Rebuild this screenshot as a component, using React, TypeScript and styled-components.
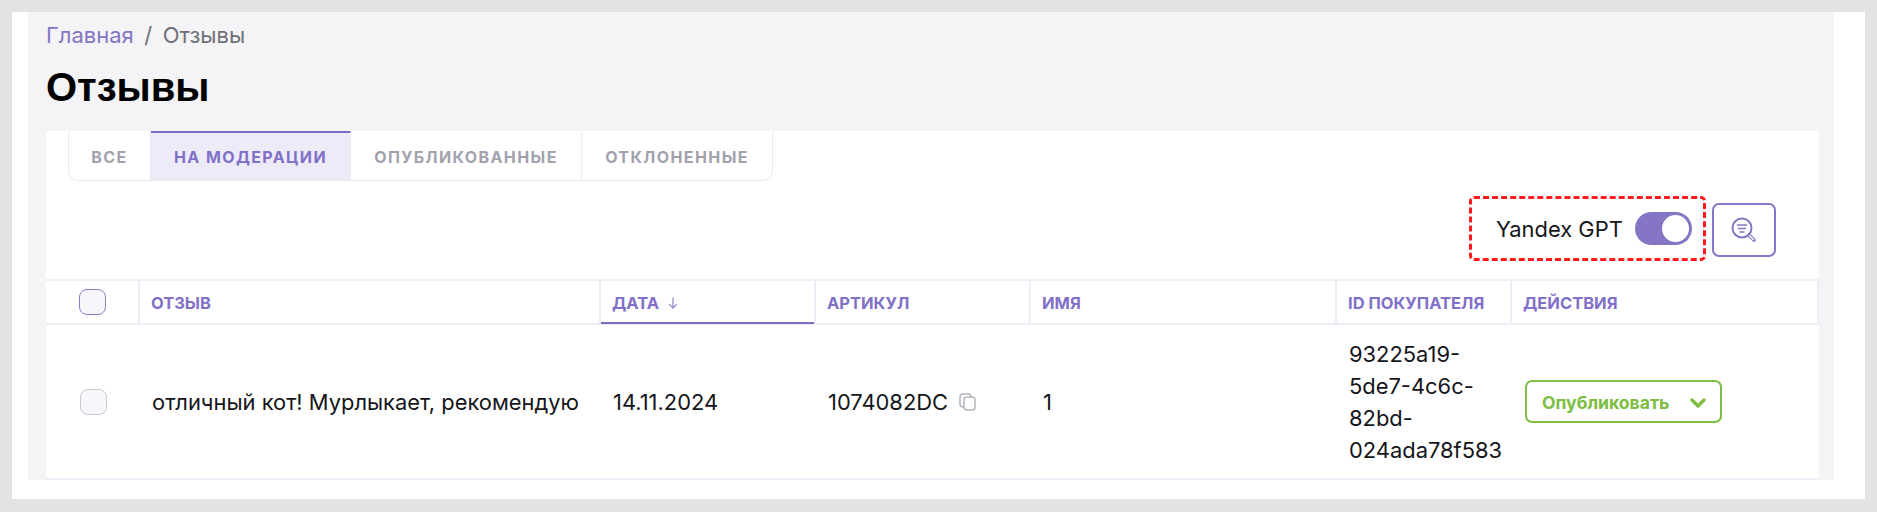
import React from "react";
import styled, { createGlobalStyle } from "styled-components";

const GlobalStyle = createGlobalStyle`
  html, body {
    margin: 0;
    padding: 0;
    background: #e3e3e3;
  }
  * {
    box-sizing: border-box;
  }
`;

const Frame = styled.div`
  width: 1853px;
  height: 487px;
  margin: 12px 0 0 12px;
  padding: 0 31px 19px 16px;
  background: #ffffff;
  font-family: Inter, "Noto Sans", sans-serif;
  overflow: hidden;
`;

const Page = styled.div`
  height: 100%;
  padding: 0 15px 0 18px;
  background: #f4f4f7;
  display: flex;
  flex-direction: column;
`;

const Breadcrumbs = styled.nav`
  display: flex;
  gap: 10.5px;
  height: 36px;
  padding-top: 10px;
  font-size: 22px;
  line-height: 26px;
  color: #6f6f77;
`;

const Crumb = styled.a`
  color: #8575c4;
`;

const Title = styled.h1`
  margin: 0;
  height: 84px;
  padding-top: 16px;
  font-family: "Liberation Sans", Arial, sans-serif;
  font-size: 40px;
  line-height: 46px;
  font-weight: 700;
  color: #000000;
`;

const Panel = styled.section`
  flex: 1;
  background: #ffffff;
  display: flex;
  flex-direction: column;
`;

const Tabs = styled.div`
  display: flex;
  align-self: flex-start;
  height: 50px;
  margin-left: 22px;
  border: 1px solid #ebebf3;
  border-top: none;
  border-radius: 0 0 10px 10px;
`;

const Tab = styled.div<{ $active?: boolean; $width: number }>`
  display: flex;
  align-items: center;
  justify-content: center;
  width: ${(p) => p.$width}px;
  font-size: 16px;
  font-weight: 700;
  letter-spacing: 1.4px;
  color: ${(p) => (p.$active ? "#8170c8" : "#a3a1ae")};
  background: ${(p) => (p.$active ? "#eeebf9" : "transparent")};
  border-top: 2px solid ${(p) => (p.$active ? "#7d6cc4" : "transparent")};
  border-right: 1px solid #ebebf3;
  &:last-child {
    border-right: none;
  }
`;

const Toolbar = styled.div`
  display: flex;
  justify-content: flex-end;
  align-items: flex-start;
  gap: 6px;
  height: 98px;
  padding: 15px 43px 0 0;
`;

const GptBox = styled.div`
  display: flex;
  align-items: center;
  gap: 12px;
  width: 237px;
  height: 65px;
  padding: 0 0 0 24px;
  border: 3px dashed #ff1a1f;
  border-radius: 5px;
`;

const GptLabel = styled.span`
  font-size: 21.9px;
  color: #15151a;
`;

const Toggle = styled.div`
  display: flex;
  align-items: center;
  justify-content: flex-end;
  flex: none;
  width: 57px;
  height: 33px;
  padding-right: 3px;
  border-radius: 17px;
  background: #8575c4;
`;

const Knob = styled.div`
  width: 27px;
  height: 27px;
  border-radius: 50%;
  background: #ffffff;
`;

const SearchButton = styled.button`
  display: flex;
  align-items: center;
  justify-content: center;
  width: 64px;
  height: 54px;
  margin-top: 7px;
  padding: 0;
  background: #ffffff;
  border: 2px solid #8575c4;
  border-radius: 7px;
`;

const Row = styled.div<{ $head?: boolean }>`
  display: grid;
  grid-template-columns: 94px 461px 215px 215px 306px 175px 307px;
  height: ${(p) => (p.$head ? "46px" : "155px")};
  border-bottom: 2px solid #ededf5;
  ${(p) => p.$head && "border-top: 2px solid #ededf5;"}
`;

const HeadCell = styled.div<{ $sorted?: boolean }>`
  display: flex;
  align-items: center;
  gap: 8px;
  padding-left: 11px;
  padding-top: 1px;
  font-size: 16.5px;
  font-weight: 700;
  color: #8170c8;
  border-right: 2px solid #ededf5;
  ${(p) => p.$sorted && "box-shadow: inset 0 -2px 0 #7d6cc4; margin-bottom: -1px;"}
`;

const CheckCell = styled.div`
  display: flex;
  align-items: center;
  justify-content: center;
`;

const HeadCheckCell = styled(CheckCell)`
  border-right: 2px solid #ededf5;
`;

const Check = styled.div<{ $head?: boolean }>`
  width: 27px;
  height: 26px;
  margin-left: 1px;
  border-radius: 8px;
  background: #f7f7fb;
  border: 1.5px solid ${(p) => (p.$head ? "#8c7dcc" : "#c9c9cf")};
`;

const Cell = styled.div`
  display: flex;
  align-items: center;
  gap: 10px;
  padding-left: 12px;
  font-size: 21.9px;
  line-height: 32px;
  color: #15151a;
`;

const BuyerCell = styled(Cell)`
  padding-right: 6px;
  overflow-wrap: anywhere;
`;

const PublishButton = styled.button`
  display: flex;
  align-items: center;
  justify-content: space-between;
  width: 197px;
  height: 43px;
  margin-left: 13px;
  padding: 2px 13px 0 15px;
  background: #ffffff;
  border: 2px solid #7cbd42;
  border-radius: 7px;
  font-family: Inter, "Noto Sans", sans-serif;
  font-size: 17.6px;
  font-weight: 700;
  color: #7cbd42;
`;

const ActionCell = styled.div`
  display: flex;
  align-items: center;
`;

const SearchIcon = () => (
  <svg width="28" height="28" viewBox="0 0 28 28" fill="none" stroke="#8575c4" strokeLinecap="round">
    <circle cx="12" cy="12" r="9.5" strokeWidth="2" />
    <path d="M7.5 9h9M8.5 12.5h7M10 16h4" strokeWidth="1.5" />
    <path d="M19 19l5 5" strokeWidth="3.6" />
    <path d="M19.6 19.6l3.8 3.8" strokeWidth="1.4" stroke="#ffffff" />
  </svg>
);

const SortIcon = () => (
  <svg width="12" height="14" viewBox="0 0 12 14" fill="none" stroke="#9c8fd2" strokeWidth="1.3" strokeLinecap="round" strokeLinejoin="round">
    <path d="M6 2v10M2.5 8.5L6 12l3.5-3.5" />
  </svg>
);

const CopyIcon = () => (
  <svg width="20" height="20" viewBox="0 0 20 20" fill="none" stroke="#b4b4bc" strokeWidth="1.5">
    <rect x="2" y="2" width="11" height="13" rx="3" />
    <rect x="6" y="5" width="11" height="13" rx="3" fill="#ffffff" />
  </svg>
);

const ChevronIcon = () => (
  <svg width="18" height="12" viewBox="0 0 18 12" fill="none" stroke="#7cbd42" strokeWidth="3.4" strokeLinecap="round" strokeLinejoin="round">
    <path d="M3 3l6 6 6-6" />
  </svg>
);

export default function App() {
  return (
    <>
      <GlobalStyle />
      <Frame>
        <Page>
          <Breadcrumbs>
            <Crumb>Главная</Crumb>
            <span>/</span>
            <span>Отзывы</span>
          </Breadcrumbs>
          <Title>Отзывы</Title>
          <Panel>
            <Tabs>
              <Tab $width={82}>ВСЕ</Tab>
              <Tab $width={200} $active>НА МОДЕРАЦИИ</Tab>
              <Tab $width={231}>ОПУБЛИКОВАННЫЕ</Tab>
              <Tab $width={190}>ОТКЛОНЕННЫЕ</Tab>
            </Tabs>
            <Toolbar>
              <GptBox>
                <GptLabel>Yandex GPT</GptLabel>
                <Toggle>
                  <Knob />
                </Toggle>
              </GptBox>
              <SearchButton>
                <SearchIcon />
              </SearchButton>
            </Toolbar>
            <Row $head>
              <HeadCheckCell>
                <Check $head />
              </HeadCheckCell>
              <HeadCell>ОТЗЫВ</HeadCell>
              <HeadCell $sorted>
                ДАТА <SortIcon />
              </HeadCell>
              <HeadCell>АРТИКУЛ</HeadCell>
              <HeadCell>ИМЯ</HeadCell>
              <HeadCell>ID ПОКУПАТЕЛЯ</HeadCell>
              <HeadCell>ДЕЙСТВИЯ</HeadCell>
            </Row>
            <Row>
              <CheckCell>
                <Check />
              </CheckCell>
              <Cell>отличный кот! Мурлыкает, рекомендую</Cell>
              <Cell>14.11.2024</Cell>
              <Cell>
                1074082DC <CopyIcon />
              </Cell>
              <Cell>1</Cell>
              <BuyerCell>93225a19-5de7-4c6c-82bd-024ada78f583</BuyerCell>
              <ActionCell>
                <PublishButton>
                  Опубликовать <ChevronIcon />
                </PublishButton>
              </ActionCell>
            </Row>
          </Panel>
        </Page>
      </Frame>
    </>
  );
}
